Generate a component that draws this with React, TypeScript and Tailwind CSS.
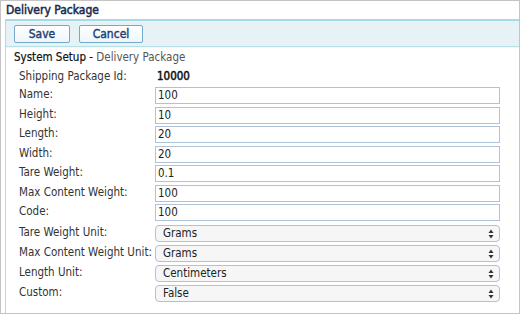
import React from "react";

const inputs = [
  { label: "Name:", value: "100" },
  { label: "Height:", value: "10" },
  { label: "Length:", value: "20" },
  { label: "Width:", value: "20" },
  { label: "Tare Weight:", value: "0.1" },
  { label: "Max Content Weight:", value: "100" },
  { label: "Code:", value: "100" },
];

const selects = [
  { label: "Tare Weight Unit:", value: "Grams" },
  { label: "Max Content Weight Unit:", value: "Grams" },
  { label: "Length Unit:", value: "Centimeters" },
  { label: "Custom:", value: "False" },
];

function Arrows() {
  return (
    <svg width="6" height="10" viewBox="0 0 6 10" className="shrink-0">
      <path d="M3 0.5 L5.5 4 L0.5 4 Z" fill="#333" />
      <path d="M3 9.5 L5.5 6 L0.5 6 Z" fill="#333" />
    </svg>
  );
}

function ToolButton({ children, width }: { children: React.ReactNode; width: string }) {
  return (
    <button
      className={`${width} h-[18px] rounded-[2px] border border-[#74a9ca] bg-gradient-to-b from-white to-[#eef6fa] text-[12px] text-[#1f3f77] leading-none [-webkit-text-stroke:0.4px]`}
    >
      {children}
    </button>
  );
}

export default function App() {
  return (
    <div className="w-[520px] h-[314px] border border-[#c4c4c4] bg-white font-['DejaVu_Sans_Condensed','DejaVu_Sans',sans-serif] text-[#222]">
      <div className="h-[18px] pl-[5px] pt-[2px] text-[12px] text-[#1c2b4a] leading-[14px] [-webkit-text-stroke:0.5px]">
        Delivery Package
      </div>
      <div className="ml-[4px] h-[294px] border-l border-[#a8dce6]">
        {/* Toolbar */}
        <div className="h-[28px] border-t-2 border-b border-t-[#a6dbe6] border-b-[#b8e0e7] bg-[#e6f2f6] flex items-center gap-[9px] pl-[8px] shadow-[0_1px_0_#eef7f9]">
          <ToolButton width="w-[56px]">Save</ToolButton>
          <ToolButton width="w-[64px]">Cancel</ToolButton>
        </div>

        <div className="pl-[8px] pt-[2px] h-[17px] text-[11.5px] leading-[17px]">
          <span className="text-[#111] [-webkit-text-stroke:0.2px]">System Setup - </span>
          <span className="text-[#555]">Delivery Package</span>
        </div>

        <div className="pl-[13px] pt-[4px] text-[11.5px] text-[#333]">
          <div className="flex items-center h-[18px]">
            <div className="w-[136px] whitespace-nowrap">Shipping Package Id:</div>
            <div className="pl-[2px] text-[#111] [-webkit-text-stroke:0.5px]">10000</div>
          </div>
          {inputs.map((row) => (
            <div key={row.label} className="flex items-center h-[19.5px]">
              <div className="w-[136px] -mt-[2px] whitespace-nowrap">{row.label}</div>
              <div className="w-[345px] h-[17px] border border-[#aec2d8] bg-white pl-[2px] leading-[15px] text-[#222]">
                {row.value}
              </div>
            </div>
          ))}
          <div className="h-[1px]" />
          {selects.map((row) => (
            <div key={row.label} className="flex items-center h-[20px]">
              <div className="w-[136px] -mt-[2px] whitespace-nowrap">{row.label}</div>
              <div className="w-[345px] h-[17px] rounded-[4px] border border-[#aec2d8] bg-[#f6f6f6] pl-[7px] pr-[5px] flex items-center justify-between text-[#222]">
                <span>{row.value}</span>
                <Arrows />
              </div>
            </div>
          ))}
        </div>
      </div>
    </div>
  );
}
